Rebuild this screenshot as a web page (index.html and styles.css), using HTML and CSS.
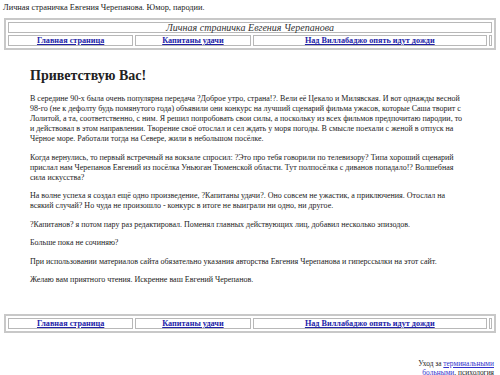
FILE: index.html
```html
<!DOCTYPE html>
<html lang="ru">
<head>
  <meta charset="UTF-8">
  <title>Личная страничка Евгения Черепанова. Юмор, пародии.</title>
  <link rel="stylesheet" href="styles.css">
</head>
<body>
  <div class="site-title">Личная страничка Евгения Черепанова. Юмор, пародии.</div>

  <table class="nav">
    <tr>
      <td colspan="4" class="nav-caption">Личная страничка Евгения Черепанова</td>
    </tr>
    <tr>
      <td class="c1"><a href="#">Главная страница</a></td>
      <td class="c2"><a href="#">Капитаны удачи</a></td>
      <td class="c3"><a href="#">Над Виллабаджо опять идут дожди</a></td>
      <td class="c4"></td>
    </tr>
  </table>

  <div class="content">
    <h1>Приветствую Вас!</h1>
    <p>В середине 90-х была очень популярна передача ?Доброе утро, страна!?. Вели её Цекало и Милявская. И вот однажды весной<br>
    98-го (не к дефолту будь помянутого года) объявили они конкурс на лучший сценарий фильма ужасов, которые Саша творит с<br>
    Лолитой, а та, соответственно, с ним. Я решил попробовать свои силы, а поскольку из всех фильмов предпочитаю пародии, то<br>
    и действовал в этом направлении. Творение своё отослал и сел ждать у моря погоды. В смысле поехали с женой в отпуск на<br>
    Чёрное море. Работали тогда на Севере, жили в небольшом посёлке.</p>
    <p>Когда вернулись, то первый встречный на вокзале спросил: ?Это про тебя говорили по телевизору? Типа хороший сценарий<br>
    прислал нам Черепанов Евгений из посёлка Уньюган Тюменской области. Тут полпосёлка с диванов попадало!? Волшебная<br>
    сила искусства?</p>
    <p>На волне успеха я создал ещё одно произведение, ?Капитаны удачи?. Оно совсем не ужастик, а приключения. Отослал на<br>
    всякий случай? Но чуда не произошло - конкурс в итоге не выиграли ни одно, ни другое.</p>
    <p>?Капитанов? я потом пару раз редактировал. Поменял главных действующих лиц, добавил несколько эпизодов.</p>
    <p>Больше пока не сочиняю?</p>
    <p>При использовании материалов сайта обязательно указания авторства Евгения Черепанова и гиперссылки на этот сайт.</p>
    <p>Желаю вам приятного чтения. Искренне ваш Евгений Черепанов.</p>
  </div>

  <table class="nav nav-bottom">
    <tr>
      <td class="c1"><a href="#">Главная страница</a></td>
      <td class="c2"><a href="#">Капитаны удачи</a></td>
      <td class="c3"><a href="#">Над Виллабаджо опять идут дожди</a></td>
      <td class="c4"></td>
    </tr>
  </table>

  <div class="partner">
    Уход за <a href="#">терминальными<br>больными</a>, психология
  </div>
</body>
</html>
```

FILE: styles.css
```css
body {
  font-family: "Liberation Serif", "Times New Roman", serif;
  font-size: 8px;
  color: #222;
  background: #fff;
  margin: 0;
  padding: 3px 4px 0 4px;
}
.site-title {
  font-size: 8.4px;
  line-height: 10px;
  margin: 0 0 5px -1px;
}
.nav {
  width: 492px;
  border: 2px solid #c8c8c8;
  border-spacing: 2px;
  margin: 0;
}
.nav td {
  border: 1px solid #b8b8b8;
  text-align: center;
  padding: 0 2px;
  height: 9px;
  line-height: 9px;
}
.nav-caption {
  font-style: italic;
  font-size: 10px;
  color: #333;
}
.nav .c1 { width: 120px; }
.nav .c2 { width: 110px; }
.nav .c3 { width: 230px; }
.nav .c4 { width: 1px; padding: 0; }
.nav a {
  color: #2323a8;
  font-weight: bold;
  font-size: 8.2px;
}
.content {
  margin: 0 10px 0 26px;
  padding-top: 18px;
}
h1 {
  font-size: 14px;
  margin: 0 0 10px 0;
  line-height: 16px;
}
p {
  margin: 0 0 8.5px 0;
  line-height: 10px;
}
.nav-bottom {
  margin-top: 29px;
}
.partner {
  text-align: right;
  font-size: 7.4px;
  line-height: 9px;
  margin-top: 26px;
  padding-right: 2px;
}
.partner a {
  color: #3333cc;
}
```
